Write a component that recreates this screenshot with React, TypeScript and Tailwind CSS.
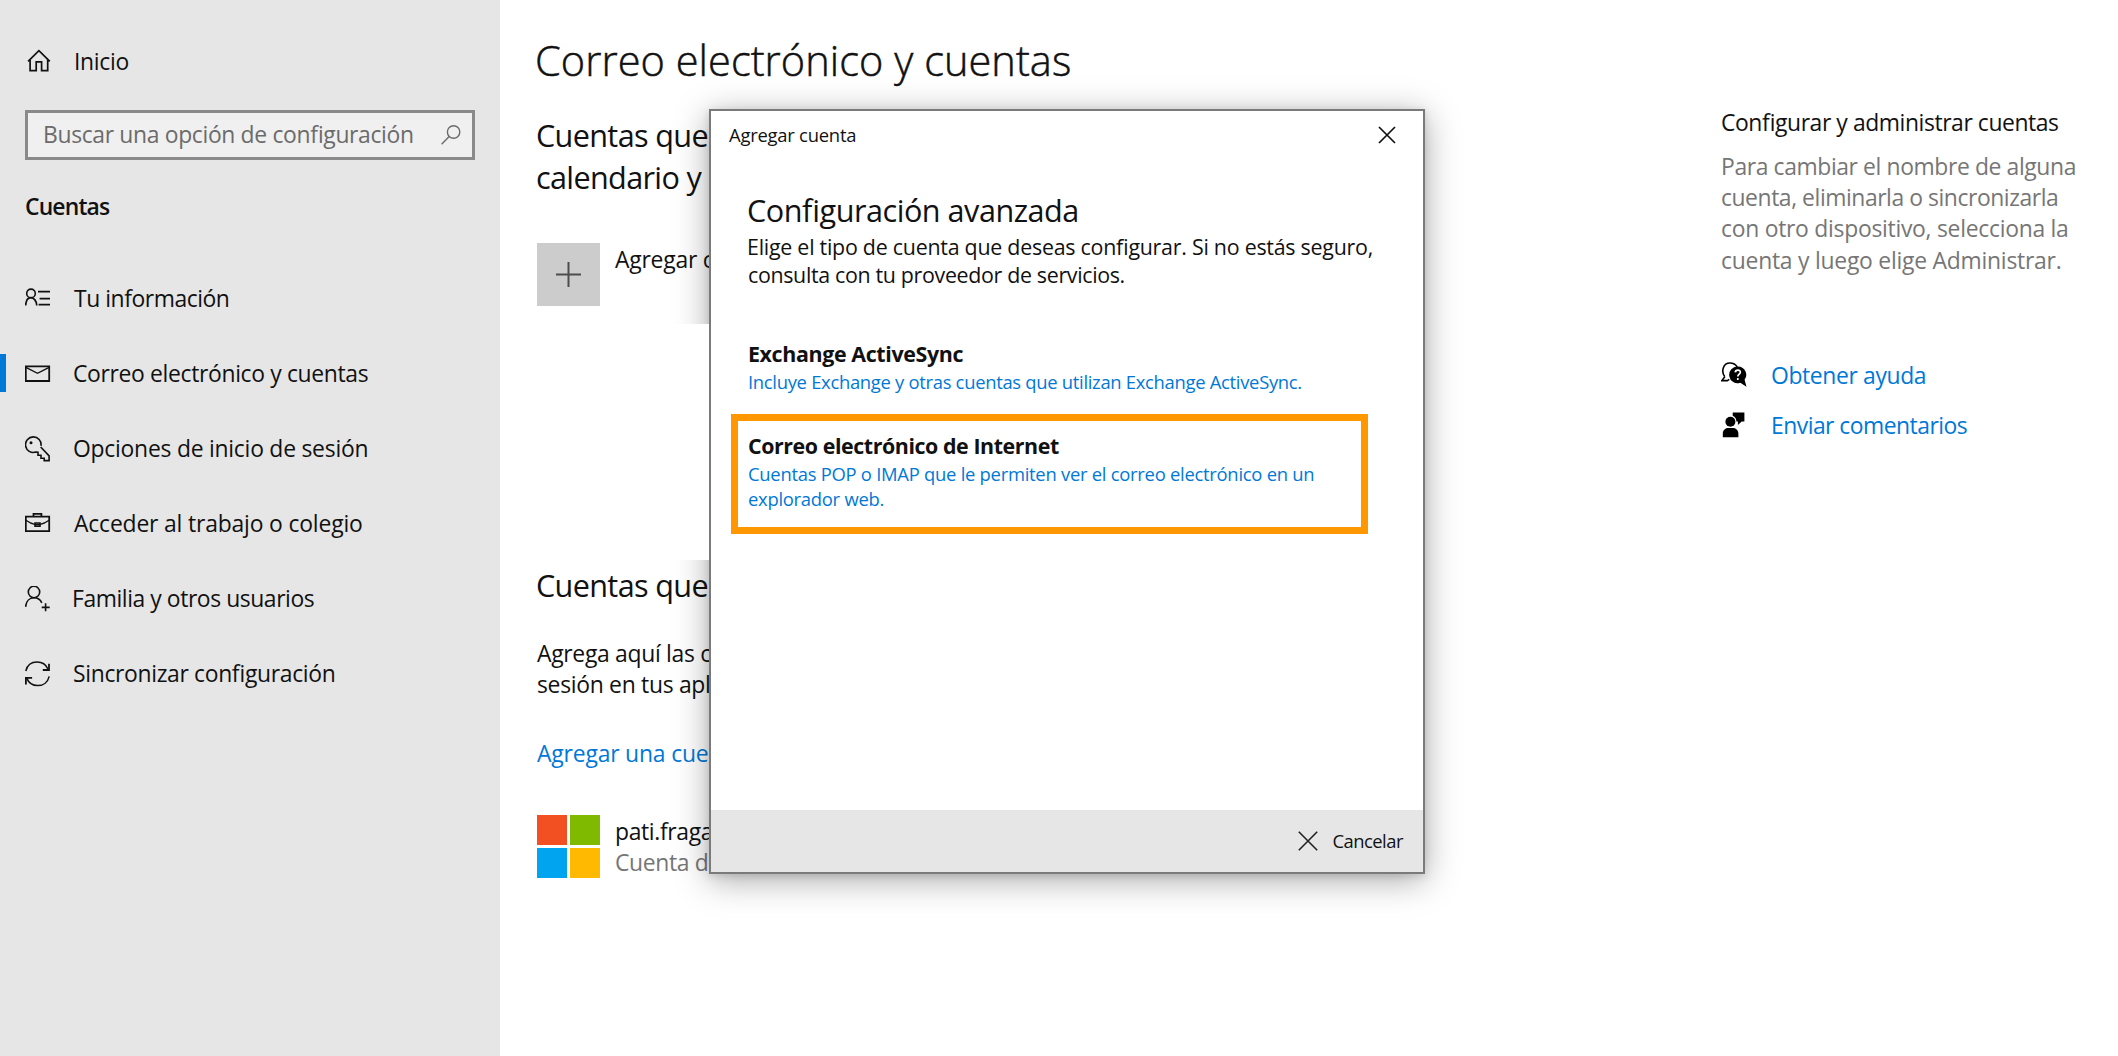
import type { ReactNode } from "react";

type IconProps = { children: ReactNode; className?: string };

function Glyph({ children, className = "" }: IconProps) {
  return (
    <svg
      width="26"
      height="26"
      viewBox="0 0 26 26"
      fill="none"
      stroke="currentColor"
      strokeWidth="1.6"
      className={`shrink-0 ${className}`}
    >
      {children}
    </svg>
  );
}

const HomeIcon = () => (
  <Glyph className="ml-[1px]">
    <path d="M2.1 13.4 12.900 2.600l10.900 10.800M4.100 11.500v11.200h6.100v-8.900h5.400v8.900h6.100V11.500" strokeWidth="1.700" />
  </Glyph>
);

const InfoIcon = () => (
  <Glyph>
    <circle cx="6" cy="7.400" r="4.300" />
    <path d="M.6 19.500c.3-4.600 2.400-7.800 5.400-7.800s5.500 3.200 5.800 7.800M13 5.600h12M14.600 12.700H25M13.600 18.700H25" strokeWidth="1.700" />
  </Glyph>
);

const MailIcon = () => (
  <Glyph>
    <path d="M.8 5.400h23.400v14.600H.8z" strokeWidth="1.800" />
    <path d="m.9 6.300 11.600 6 11.600-6" strokeWidth="1.400" />
  </Glyph>
);

const KeyIcon = () => (
  <Glyph>
    <path d="M16 9.800A7.800 7.800 0 1 0 10.700 16.100l2.300.2v3h3v3h3.200v2.300h4.900v-4.700L15.700 11" strokeWidth="1.600" />
    <circle cx="6" cy="6.700" r="1.500" fill="currentColor" stroke="none" />
  </Glyph>
);

const BriefcaseIcon = () => (
  <Glyph>
    <path d="M.8 5.700h23.400v14.500H.8zM8.500 5.700v-2.800h7.900v2.800" strokeWidth="1.800" />
    <path d="M.9 9.300c3 2.200 6 3.600 9 4h5.200c3-.4 6-1.800 9-4" strokeWidth="1.300" />
    <path d="M10 12h5v3.100h-5z" strokeWidth="1.600" />
  </Glyph>
);

const FamilyIcon = () => (
  <Glyph>
    <circle cx="9" cy="6" r="5.700" />
    <path d="M.6 20.800c.5-5.300 3.800-9 8.400-9 3.400 0 6.300 1.800 7.800 5M20.600 17.300v8M16.700 21.400h8" />
  </Glyph>
);

const SyncIcon = () => (
  <Glyph>
    <path d="M.8 10C2.100 4.300 6.600 1 12.200 1c4.800 0 8.900 2.800 10.800 7M24.200 15.300c-1.300 5.600-5.800 9.300-11.600 9.300-4.900 0-9-2.900-10.900-7.500" strokeWidth="1.500" />
    <path d="M24 2.700V9h-6.200M.9 23.400v-6.500h6.200" strokeWidth="1.800" />
  </Glyph>
);

const navItems = [
  { label: "Tu información", icon: <InfoIcon />, text: "ml-[23px] tracking-[-0.45px]" },
  { label: "Correo electrónico y cuentas", icon: <MailIcon />, text: "ml-[22px] tracking-[-0.34px]", active: true },
  { label: "Opciones de inicio de sesión", icon: <KeyIcon />, text: "ml-[22px] tracking-[-0.24px]" },
  { label: "Acceder al trabajo o colegio", icon: <BriefcaseIcon />, text: "ml-[23px] tracking-[-0.17px]" },
  { label: "Familia y otros usuarios", icon: <FamilyIcon />, text: "ml-[21px] tracking-[-0.43px]" },
  { label: "Sincronizar configuración", icon: <SyncIcon />, text: "ml-[22px] tracking-[-0.33px]" },
];

function Sidebar() {
  return (
    <aside className="w-[500px] shrink-0 bg-[#e6e6e6] pt-[37px]">
      <div className="flex h-12 items-center pl-[25px]">
        <HomeIcon />
        <span className="mt-[2px] ml-[22px] tracking-[-0.3px]">Inicio</span>
      </div>
      <div className="mx-[25px] mt-[25px] flex h-[50px] items-center justify-between border-[3px] border-[#8a8a8a] bg-[#f0f0f0] pr-[11px] pl-[15px] text-[#6b6b6b]">
        <span className="tracking-[-0.34px] whitespace-nowrap">Buscar una opción de configuración</span>
        <svg width="20" height="20" viewBox="0 0 20 20" fill="none" stroke="currentColor" strokeWidth="1.400" className="shrink-0">
          <circle cx="12.600" cy="7" r="6.200" />
          <path d="M8.200 11.500.6 19.200" />
        </svg>
      </div>
      <h2 className="mt-[23px] pl-[25px] font-semibold leading-[48px] tracking-[-0.85px]">Cuentas</h2>
      <nav className="mt-[30px]">
        {navItems.map((item) => (
          <div key={item.label} className="flex h-[75px] items-center">
            <div className={item.active ? "mb-px h-[38px] w-[6px] bg-[#0078d7]" : "h-[38px] w-[6px]"} />
            <div className="ml-[19px] flex items-center">
              {item.icon}
              <span className={item.text}>{item.label}</span>
            </div>
          </div>
        ))}
      </nav>
    </aside>
  );
}

function AccountsPage() {
  return (
    <main className="w-[1186px] shrink-0 overflow-hidden pt-[31px] pl-[36px] whitespace-nowrap">
      <h1 className="-ml-[1px] text-[41.5px] leading-[58px] font-light tracking-[0.06px] [-webkit-text-stroke:0.5px_#111]">Correo electrónico y cuentas</h1>
      <h2 className="mt-[25px] text-[30.6px] leading-[42px] tracking-[-0.65px]">
        Cuentas que
        <br />
        calendario y
      </h2>
      <div className="mt-[45px] flex">
        <div className="ml-[1px] flex h-[63px] w-[63px] items-center justify-center bg-[#ccc]">
          <svg width="25" height="25" viewBox="0 0 25 25" stroke="#4c4c4c" strokeWidth="2">
            <path d="M12.500 0v25M0 12.500h25" />
          </svg>
        </div>
        <span className="mt-px ml-[15px] leading-[32px] tracking-[-0.23px]">Agregar cuenta</span>
      </div>
      <h2 className="mt-[258px] text-[30.6px] leading-[42px] tracking-[-0.65px]">Cuentas que</h2>
      <p className="mt-[32px] ml-[1px] leading-[31.200px] tracking-[-0.3px]">
        Agrega aquí las cuentas
        <br />
        sesión en tus aplicaciones
      </p>
      <a className="mt-[38px] ml-[1px] block leading-[32px] tracking-[-0.18px] text-[#0078d7]">Agregar una cuenta</a>
      <div className="mt-[45px] ml-[1px] flex">
        <div className="grid h-[63px] w-[63px] grid-cols-2 gap-[3px]">
          <span className="bg-[#f25022]" />
          <span className="bg-[#7fba00]" />
          <span className="bg-[#00a4ef]" />
          <span className="bg-[#ffb900]" />
        </div>
        <div className="mt-px ml-[15px] leading-[31px] tracking-[-0.35px]">
          <div>pati.fraga</div>
          <div className="text-[#767676]">Cuenta de Microsoft</div>
        </div>
      </div>
    </main>
  );
}

function HelpPanel() {
  return (
    <section className="pt-[107px] pl-[35px] whitespace-nowrap">
      <h3 className="leading-[32px] tracking-[-0.42px]">Configurar y administrar cuentas</h3>
      <p className="mt-[12px] leading-[31.200px] text-[#767676]">
        <span className="tracking-[-0.39px]">Para cambiar el nombre de alguna</span>
        <br />
        <span className="tracking-[-0.44px]">cuenta, eliminarla o sincronizarla</span>
        <br />
        <span className="tracking-[-0.27px]">con otro dispositivo, selecciona la</span>
        <br />
        <span className="tracking-[-0.24px]">cuenta y luego elige Administrar.</span>
      </p>
      <div className="mt-[75px] text-[#0078d7]">
        <div className="flex h-[50px] items-center">
          <svg width="26" height="26" viewBox="0 0 26 26" className="mb-[2px] shrink-0 text-black" fill="none">
            <path d="M3.800 14.800C-.2 9.500 2 1 9 1c3.200 0 5.800 1.600 7.200 4M3.800 14.800.9 18.600h5.400l2-1.200" stroke="currentColor" strokeWidth="1.600" />
            <path d="M16.800 4.600a8.300 8.300 0 0 1 6.800 13.200l1.900 6.900-6.200-4A8.300 8.300 0 1 1 16.800 4.600z" fill="currentColor" />
            <path d="M14.300 10.400c.1-3.200 5.200-3 5 0-.2 1.800-2.500 1.800-2.500 4.200M16.800 16.100v2" stroke="#fff" strokeWidth="1.700" />
          </svg>
          <span className="ml-[24px] tracking-[-0.37px]">Obtener ayuda</span>
        </div>
        <div className="flex h-[50px] items-center">
          <svg width="26" height="26" viewBox="0 0 26 26" className="mb-[2px] ml-px shrink-0 text-black" fill="currentColor">
            <circle cx="8.400" cy="9.800" r="5" />
            <path d="M.8 25.300v-3.600c0-3.600 2.700-5.600 6-5.600h3.600c3.300 0 6 2 6 5.600v3.600zM10.700.6h11.700v9h-2.700L15.900 13V9.600h-1.500c.1-2.900-1.400-5-3.700-5.900z" />
          </svg>
          <span className="ml-[23px] tracking-[-0.52px]">Enviar comentarios</span>
        </div>
      </div>
    </section>
  );
}

function AddAccountDialog() {
  return (
    <div className="absolute top-[109px] left-[709px] h-[765px] w-[716px]">
      <div className="absolute inset-0 shadow-[0_6px_32px_rgba(0,0,0,0.34),0_2px_8px_rgba(0,0,0,0.12)]" />
      <div className="absolute top-[215px] right-full h-[236px] w-[175px] bg-white" />
      <div className="relative flex h-full flex-col border-2 border-[#7a7a7a] bg-white whitespace-nowrap">
        <header className="flex h-[50px] items-center justify-between pr-[27px] pb-[2px] pl-[18px] text-[18.400px] tracking-[-0.23px]">
          <span>Agregar cuenta</span>
          <svg width="18" height="18" viewBox="0 0 18 18" stroke="#111" strokeWidth="1.700">
            <path d="m1 1 16 16M17 1 1 17" />
          </svg>
        </header>
        <div className="flex-1 pt-[28px] pl-[37px]">
          <h1 className="-ml-[1px] text-[30.600px] leading-[42px] tracking-[-0.48px]">Configuración avanzada</h1>
          <div className="mt-[2px] text-[21.400px] leading-[28px]">
            <p className="-ml-px tracking-[-0.25px]">Elige el tipo de cuenta que deseas configurar. Si no estás seguro,</p>
            <p className="tracking-[-0.33px]">consulta con tu proveedor de servicios.</p>
          </div>
          <h2 className="mt-[50px] text-[21.400px] leading-[30px] font-bold tracking-[-0.37px]">Exchange ActiveSync</h2>
          <p className="text-[18.400px] leading-[25px] tracking-[-0.29px] text-[#0078d7]">
            Incluye Exchange y otras cuentas que utilizan Exchange ActiveSync.
          </p>
          <div className="mt-[20px] -ml-[17px] h-[120px] w-[637px] border-[7px] border-[#ff9700] pt-[10px] pl-[10px]">
            <h2 className="text-[21.400px] leading-[30px] font-bold tracking-[-0.43px]">Correo electrónico de Internet</h2>
            <p className="text-[18.400px] leading-[25px] tracking-[-0.26px] text-[#0078d7]">
              Cuentas POP o IMAP que le permiten ver el correo electrónico en un
              <br />
              explorador web.
            </p>
          </div>
        </div>
        <footer className="flex h-[62px] items-center justify-end bg-[#e6e6e6] pr-[20px] pb-px text-[18.400px] tracking-[-0.5px]">
          <svg width="20" height="20" viewBox="0 0 20 20" stroke="#222" strokeWidth="1.600">
            <path d="m.8.8 18.400 18.400M19.200.8.8 19.200" />
          </svg>
          <span className="ml-[14px]">Cancelar</span>
        </footer>
      </div>
    </div>
  );
}

export default function App() {
  return (
    <div className="relative flex h-[1056px] w-[2118px] overflow-hidden bg-white font-['Open_Sans','Noto_Sans',sans-serif] text-[22.9px] leading-[32px] text-[#111] [font-feature-settings:'liga'_1]">
      <Sidebar />
      <AccountsPage />
      <HelpPanel />
      <AddAccountDialog />
    </div>
  );
}
